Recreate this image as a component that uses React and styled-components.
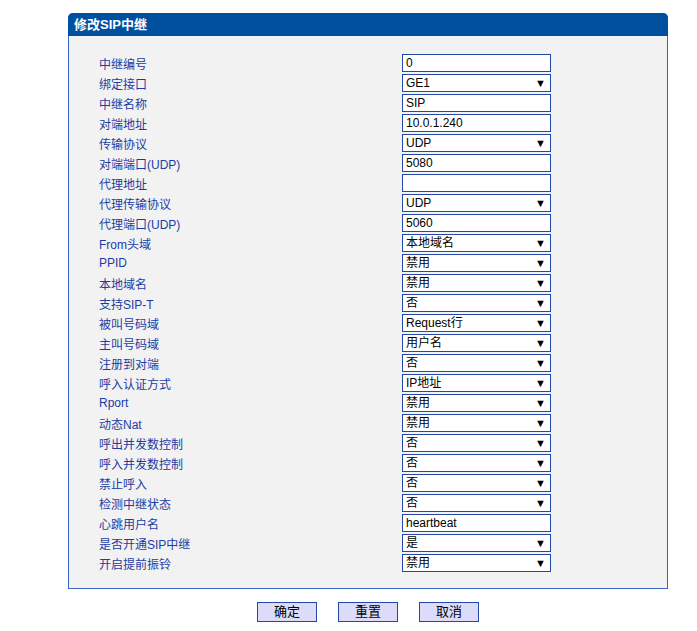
import React from 'react';
import styled, { createGlobalStyle } from 'styled-components';

const Global = createGlobalStyle`
  body {
    margin: 0;
    background: #ffffff;
    font-family: "Liberation Sans", Arial, "Noto Sans CJK SC", sans-serif;
    font-size: 12px;
  }
`

const Page = styled.div`
  padding: 13px 0 0 68px;
  width: 600px;
`

const Panel = styled.div`
  border: 1px solid #3a66c4;
  border-top: none;
  border-radius: 5px 5px 0 0;
  background: #f2f2f2;
`

const Header = styled.div`
  height: 23px;
  line-height: 23px;
  background: #0050a0;
  color: #ffffff;
  font-weight: bold;
  font-size: 13px;
  padding-left: 6px;
  border-radius: 5px 5px 0 0;
  margin: 0 -1px;
`

const Body = styled.div`
  padding: 18px 0 16px 30px;
  display: flex;
  flex-direction: column;
  gap: 2px;
`

const Row = styled.div`
  display: grid;
  grid-template-columns: 303px 149px;
  align-items: center;
  height: 18px;
`

const Label = styled.span`
  color: #1c3ca4;
  font-size: 12px;
`

const Field = styled.div`
  position: relative;
  height: 18px;
  box-sizing: border-box;
  border: 1px solid #2448a8;
  background: #ffffff;
  color: #000000;
  font-size: 12px;
  line-height: 17px;
  padding-left: 3px;
`

const Arrow = styled.span`
  position: absolute;
  right: 4px;
  top: 0;
  font-size: 11px;
  line-height: 16px;
  color: #000;
`

const Buttons = styled.div`
  display: flex;
  justify-content: center;
  gap: 21px;
  margin-top: 13px;
`

const Button = styled.button`
  width: 60px;
  height: 20px;
  box-sizing: border-box;
  border: 1px solid #2448a8;
  background: #dcdcfa;
  color: #000;
  font-family: "Liberation Sans", Arial, "Noto Sans CJK SC", sans-serif;
  font-size: 13px;
  padding: 0;
  line-height: 18px;
`

const rows = [
  ['中继编号', '0'],
  ['绑定接口', 'GE1', true],
  ['中继名称', 'SIP'],
  ['对端地址', '10.0.1.240'],
  ['传输协议', 'UDP', true],
  ['对端端口(UDP)', '5080'],
  ['代理地址', ''],
  ['代理传输协议', 'UDP', true],
  ['代理端口(UDP)', '5060'],
  ['From头域', '本地域名', true],
  ['PPID', '禁用', true],
  ['本地域名', '禁用', true],
  ['支持SIP-T', '否', true],
  ['被叫号码域', 'Request行', true],
  ['主叫号码域', '用户名', true],
  ['注册到对端', '否', true],
  ['呼入认证方式', 'IP地址', true],
  ['Rport', '禁用', true],
  ['动态Nat', '禁用', true],
  ['呼出并发数控制', '否', true],
  ['呼入并发数控制', '否', true],
  ['禁止呼入', '否', true],
  ['检测中继状态', '否', true],
  ['心跳用户名', 'heartbeat'],
  ['是否开通SIP中继', '是', true],
  ['开启提前振铃', '禁用', true],
];

export default function App() {
  return (
    <>
      <Global />
      <Page>
        <Panel>
          <Header>修改SIP中继</Header>
          <Body>
            {rows.map(([label, value, select]) => (
              <Row key={label}>
                <Label>{label}</Label>
                <Field>
                  {value}
                  {select && <Arrow>▼</Arrow>}
                </Field>
              </Row>
            ))}
          </Body>
        </Panel>
        <Buttons>
          <Button>确定</Button>
          <Button>重置</Button>
          <Button>取消</Button>
        </Buttons>
      </Page>
    </>
  );
}
